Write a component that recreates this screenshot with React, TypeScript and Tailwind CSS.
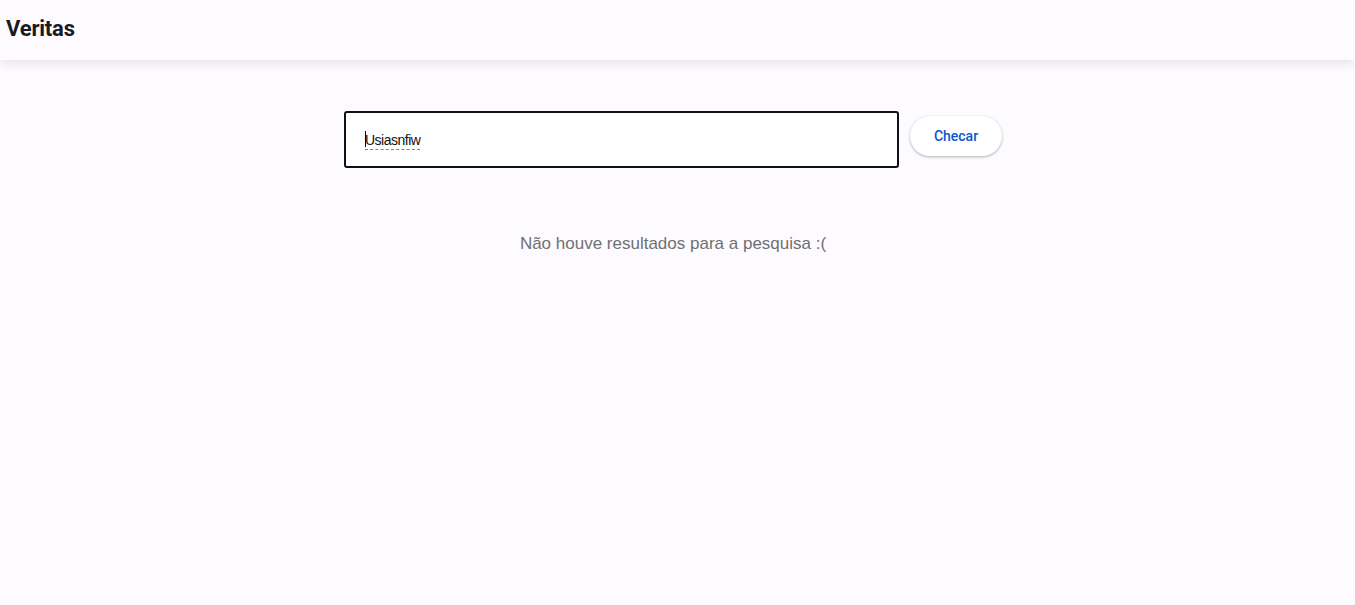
import React from "react";

export default function App() {
  return (
    <div className="min-h-[605px] w-full bg-[#fdfbff]" style={{ fontFamily: "Roboto, 'Liberation Sans', sans-serif" }}>
      <header className="h-[60px] bg-[#fdfbff] shadow-[0_4px_10px_rgba(0,0,0,0.09)] flex items-center px-[6px] relative z-10">
        <h1 className="text-[22px] font-bold text-[#1b1b1f] tracking-[-0.2px] font-['Roboto'] leading-none -mt-[3px]">Veritas</h1>
      </header>
      <main className="flex flex-col items-center pr-[9px]">
        <div className="flex items-start gap-[11px] mt-[51px]">
          <div className="w-[555px] h-[57px] bg-white border-2 border-[#111] rounded-[3px] flex items-center pl-[19px]">
            <span className="relative inline-block text-[14px] leading-[18px] tracking-[-0.5px] text-[#111] font-['Liberation_Sans'] border-b border-dashed border-[#f05050] pb-0 mt-[2px]">
              <span className="absolute left-0 top-[0px] w-px h-[16px] bg-black" />
              Usiasnfiw
            </span>
          </div>
          <button className="mt-[5px] w-[92px] h-[40px] rounded-full bg-white shadow-[0_1px_3px_rgba(0,0,0,0.3)] text-[14px] font-medium text-[#0b57d0]">
            Checar
          </button>
        </div>
        <p className="mt-[63px] text-[17px] text-[#707070] font-['Liberation_Sans']">Não houve resultados para a pesquisa :(</p>
      </main>
    </div>
  );
}
